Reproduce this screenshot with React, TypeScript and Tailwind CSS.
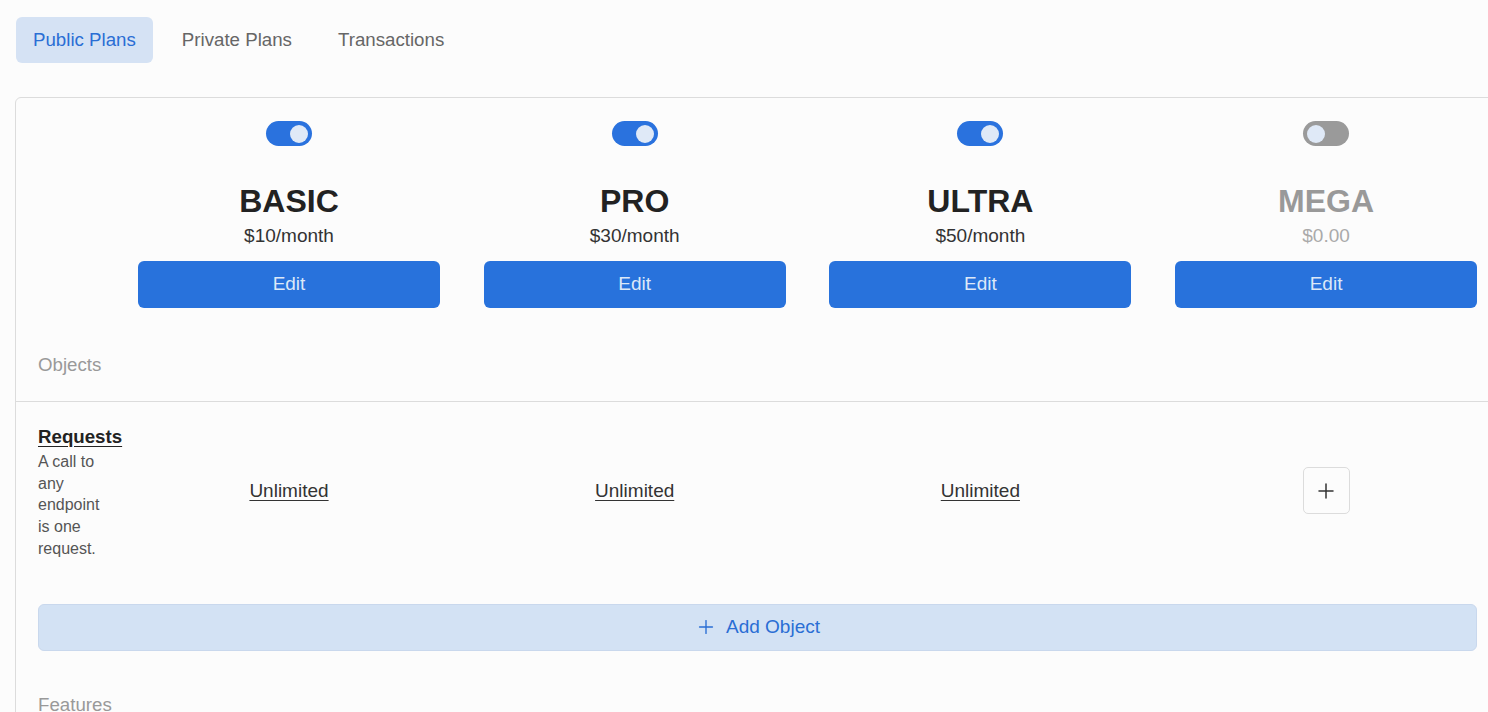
import { Plus } from "lucide-react"

type Plan = { name: string; price: string; on: boolean; value?: string }

const plans: Plan[] = [
  { name: "BASIC", price: "$10/month", on: true, value: "Unlimited" },
  { name: "PRO", price: "$30/month", on: true, value: "Unlimited" },
  { name: "ULTRA", price: "$50/month", on: true, value: "Unlimited" },
  { name: "MEGA", price: "$0.00", on: false },
]

function Toggle({ on }: { on: boolean }) {
  return (
    <div
      className={
        "flex h-[25px] w-[46px] items-center rounded-full px-[4px] " +
        (on ? "justify-end bg-[#2a72de]" : "justify-start bg-[#9a9a9a]")
      }
    >
      <div className="h-[18px] w-[18px] rounded-full bg-[#dfe9f7]" />
    </div>
  )
}

export default function App() {
  return (
    <div className="min-h-screen overflow-hidden bg-[#fcfcfc] pl-[15px] pt-[17px] font-['Liberation_Sans',Arial,sans-serif]">
      <div className="flex items-center pl-[1px]">
        <button className="h-[46px] rounded-[6px] bg-[#d5e2f4] px-[17px] text-[18.7px] text-[#2a6ed4]">
          Public Plans
        </button>
        <button className="ml-[29px] text-[18.7px] text-[#666]">Private Plans</button>
        <button className="ml-[46px] text-[18.7px] text-[#666]">Transactions</button>
      </div>

      <div className="mt-[34px] w-[1520px] rounded-tl-[6px] border border-[#dcdcdc] bg-[#fcfcfc]">
        <div className="flex pl-[22px] pt-[23px]">
          <div className="w-[100px] shrink-0" />
          <div className="flex gap-[43.7px]">
            {plans.map((p) => (
              <div key={p.name} className="flex w-[302px] flex-col items-center">
                <Toggle on={p.on} />
                <div
                  className={
                    "mt-[37px] text-[32px] font-bold leading-[36px] " +
                    (p.on ? "text-[#222]" : "text-[#999]")
                  }
                >
                  {p.name}
                </div>
                <div
                  className={
                    "mt-[6px] text-[19px] leading-[22px] " +
                    (p.on ? "text-[#333]" : "text-[#aaa]")
                  }
                >
                  {p.price}
                </div>
                <button className="mt-[14px] h-[47px] w-full rounded-[6px] bg-[#2872dc] text-[19px] text-[#dce8f8]">
                  Edit
                </button>
              </div>
            ))}
          </div>
        </div>

        <div className="pl-[22px] pt-[46px] pb-[25px] text-[18.7px] leading-[22px] text-[#999]">
          Objects
        </div>
        <div className="border-t border-[#dcdcdc]" />

        <div className="flex items-center pl-[22px] pt-[24px]">
          <div className="w-[100px] shrink-0">
            <div className="text-[18.7px] font-bold leading-[22px] text-[#222] underline underline-offset-[3px]">
              Requests
            </div>
            <div className="mt-[3px] w-[72px] text-[16px] leading-[21.7px] text-[#555]">
              A call to any endpoint is one request.
            </div>
          </div>
          <div className="flex items-center gap-[43.7px] pb-[4px]">
            {plans.map((p) => (
              <div key={p.name} className="flex w-[302px] items-center justify-center">
                {p.value ? (
                  <span className="text-[19px] text-[#333] underline underline-offset-[3px]">
                    {p.value}
                  </span>
                ) : (
                  <button className="flex h-[47px] w-[47px] items-center justify-center rounded-[5px] border border-[#dcdcdc] text-[#333]">
                    <Plus className="h-[24px] w-[24px]" strokeWidth={1.5} />
                  </button>
                )}
              </div>
            ))}
          </div>
        </div>

        <div className="pl-[22px] pt-[44px]">
          <button className="flex h-[47px] w-[1439px] items-center justify-center gap-[9px] rounded-[6px] border border-[#c9d8ed] bg-[#d3e2f4] text-[19px] text-[#2a6ed4]">
            <Plus className="h-[22px] w-[22px]" strokeWidth={1.5} />
            Add Object
          </button>
        </div>

        <div className="pl-[22px] pt-[43px] pb-[40px] text-[18.7px] leading-[22px] text-[#999]">
          Features
        </div>
      </div>
    </div>
  )
}
